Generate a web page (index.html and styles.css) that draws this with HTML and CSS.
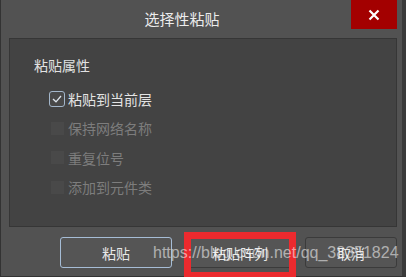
FILE: index.html
```html
<!DOCTYPE html>
<html lang="zh-CN">
<head>
    <meta charset="UTF-8">
    <title>选择性粘贴</title>
    <link rel="stylesheet" href="styles.css">
</head>
<body>
    <div class="window">
        <div class="titlebar">
            <div class="title">选择性粘贴</div>
            <button class="close" type="button">
                <svg width="12" height="12" viewBox="0 0 12 12">
                    <path d="M1.5 1.5 L10.5 10.5 M10.5 1.5 L1.5 10.5" stroke="#fff" stroke-width="2.2" fill="none"/>
                </svg>
            </button>
        </div>

        <div class="group">
            <div class="group-label">粘贴属性</div>
            <label class="check">
                <span class="box checked">
                    <svg width="10" height="8" viewBox="0 0 10 8">
                        <path d="M1 4 L4 6.8 L9 1" stroke="#dfe6ee" stroke-width="1.3" fill="none"/>
                    </svg>
                </span>
                粘贴到当前层
            </label>
            <label class="check disabled"><span class="box"></span>保持网络名称</label>
            <label class="check disabled"><span class="box"></span>重复位号</label>
            <label class="check disabled"><span class="box"></span>添加到元件类</label>
        </div>

        <div class="actions">
            <button class="btn btn-focus" type="button">粘贴</button>
            <button class="btn btn-array" type="button">粘贴阵列<span class="mark"></span></button>
            <button class="btn btn-cancel" type="button">取消</button>
        </div>

        <div class="watermark">https://blog.csdn.net/qq_38351824</div>
    </div>
</body>
</html>
```

FILE: styles.css
```css
html, body {
    margin: 0;
    padding: 0;
    background: #2f2f2f;
}

body {
    width: 406px;
    height: 277px;
    overflow: hidden;
    font-family: "Noto Sans CJK SC", "Noto Sans", sans-serif;
}

.window {
    position: relative;
    box-sizing: border-box;
    width: 406px;
    height: 277px;
    background: #525252;
    border-left: 1px solid #333333;
    border-right: 4px solid #3a3a3a;
    border-bottom: 1px solid #333333;
    padding: 0 5px 0 8px;
}

.titlebar {
    display: flex;
    align-items: flex-start;
    height: 38px;
}

.title {
    flex: 1;
    text-align: center;
    color: #ececec;
    font-size: 15px;
    line-height: 38px;
    padding-left: 4px;
}

.close {
    width: 46px;
    height: 29px;
    border: none;
    padding: 0;
    background: #a30000;
    display: flex;
    align-items: center;
    justify-content: center;
}

.group {
    box-sizing: border-box;
    height: 189px;
    background: #434343;
    border: 1px solid #363636;
    padding: 16px 0 0 24px;
}

.group-label {
    color: #e2e2e2;
    font-size: 14px;
    line-height: 20px;
    margin-bottom: 9px;
}

.check {
    display: flex;
    align-items: center;
    height: 29.5px;
    padding-left: 15px;
    color: #e4e4e4;
    font-size: 14px;
}

.box {
    box-sizing: border-box;
    width: 16px;
    height: 16px;
    margin-right: 3px;
    display: flex;
    align-items: center;
    justify-content: center;
}

.box.checked {
    border: 1px solid #a3b6ca;
    border-radius: 3px;
    background: #484848;
}

.check.disabled {
    color: #7d7d7d;
}

.check.disabled .box {
    width: 13px;
    height: 13px;
    margin: 0 4px 0 2px;
    background: #494949;
}

.actions {
    display: flex;
    margin-top: 10px;
    padding-left: 51px;
}

.btn {
    position: relative;
    box-sizing: border-box;
    height: 31px;
    border: 1px solid #3b3b3b;
    border-radius: 3px;
    background: #555555;
    color: #e8e8e8;
    font-family: "Noto Sans CJK SC", "Noto Sans", sans-serif;
    font-size: 14px;
    padding: 0;
}

.btn-focus {
    width: 112px;
    border-color: #a6bdd6;
}

.btn-array {
    width: 112px;
    margin-left: 12px;
}

.btn-cancel {
    width: 92px;
    margin-left: 9px;
}

.mark {
    position: absolute;
    top: -6px;
    left: -1px;
    right: -1px;
    bottom: -12px;
    border: 7px solid #ec2a2e;
}

.watermark {
    position: absolute;
    left: 152px;
    top: 244px;
    font-family: "Liberation Sans", Arial, sans-serif;
    font-size: 16px;
    color: rgba(255, 255, 255, 0.55);
    white-space: nowrap;
}
```
